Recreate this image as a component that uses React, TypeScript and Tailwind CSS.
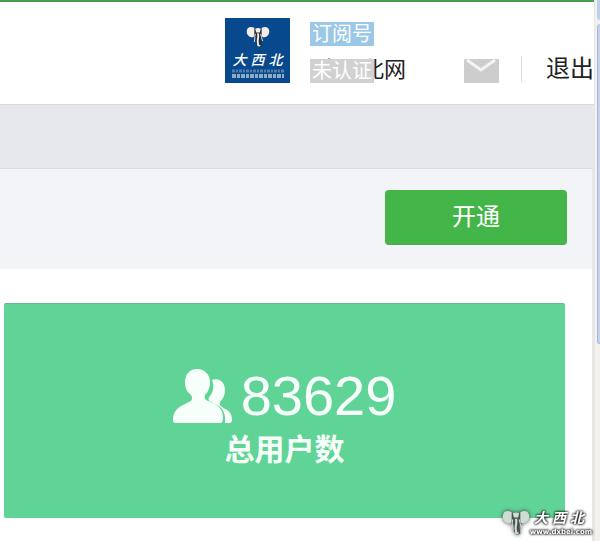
import React from 'react';

const account = {
  name: '大西北网',
  type: '订阅号',
  status: '未认证',
};

const totalUsers = 83629;

interface ElephantProps {
  className?: string;
  earColor: string;
  shadeColor: string;
}

const Elephant: React.FC<ElephantProps> = ({ className, earColor, shadeColor }) => (
  <svg viewBox="0 0 26 24" className={className} aria-hidden="true">
    <path d="M9 3h9l2 8-4 3 1 8-3 1-3-3 1-6-4-3z" fill={shadeColor} />
    <path d="M9 2C5 0 2 1 1 4c-1 4 1 7 4 8 2 1 4 0 4-2V6z" fill={earColor} />
    <path d="M17 2c4-2 7-1 8 2 1 4-1 7-4 8-2 1-4 0-4-2V6z" fill={earColor} />
    <path d="M10 3c2-1 4-1 6 0l-1 4h-4zM12 8h2c1 4-1 8 0 11 0 2 1 2 2 2-1 2-4 2-4-1-1-4 1-8 0-12z" fill={earColor} />
    <path
      d="M10 9c-1 3 0 5-1 8M16 9c1 3 1 5 2 7"
      fill="none"
      stroke={earColor}
      strokeWidth="1"
      strokeLinecap="round"
    />
  </svg>
);

const Avatar: React.FC = () => (
  <div className="w-[65px] h-[65px] bg-[#08488c] flex flex-col items-center pt-2 overflow-hidden shrink-0 text-white">
    <Elephant className="w-6 h-[22px] shrink-0" earColor="#f1eee8" shadeColor="#2b2a30" />
    <div className="flex gap-1 mt-1 italic text-sm leading-4 font-medium">
      <span>大</span>
      <span>西</span>
      <span>北</span>
    </div>
    <svg viewBox="0 0 54 12" className="w-[54px] h-3 shrink-0" aria-hidden="true">
      <path d="M1 3h52" stroke="#5580aa" strokeWidth="3" strokeDasharray="3 1 2 1" />
      <path d="M1 8h52" stroke="#8fabc6" strokeWidth="4" strokeDasharray="4 1 3 1" />
    </svg>
  </div>
);

const Header: React.FC = () => (
  <header className="h-[105px] bg-white border-t-2 border-[#4c9c50] border-b border-b-[#d8d9dc] flex justify-end items-start pt-4">
    <Avatar />
    <div className="relative ml-5 w-[97px] pt-1">
      <span className="block w-16 h-6 bg-[#9cc8e8] text-white text-[20px] leading-6 text-center">
        {account.type}
      </span>
      <div className="mt-3 pl-2 text-[22px] leading-6 whitespace-nowrap text-[#222]">{account.name}</div>
      <span className="absolute left-0 -bottom-px w-16 h-6 bg-[#d1d1d1] text-white text-[20px] leading-6 text-center">
        {account.status}
      </span>
    </div>
    <nav className="flex items-center pt-[37px] ml-[57px]">
      <a href="#messages" aria-label="消息" className="pt-1">
        <svg viewBox="0 0 35 24" className="w-[35px] h-6">
          <rect width="35" height="24" rx="1" fill="#cdcdcd" />
          <path d="M3 1l14 10L31 1" fill="none" stroke="#f4f4f4" strokeWidth="3" />
        </svg>
      </a>
      <span className="w-px h-[26px] bg-[#dedede] ml-[22px] mr-6" />
      <a href="#logout" className="text-2xl leading-7 text-[#222]">退出</a>
    </nav>
  </header>
);

const UsersIcon: React.FC = () => (
  <svg viewBox="0 0 60 54" className="w-[60px] h-[54px]" fill="#f7fffa" aria-hidden="true">
    <path d="M24 0c8 0 13 6 13 13 0 6-2 10-5 13-1 3 0 5 3 6l7 3c5 3 8 7 8 14 0 3-1 5-3 5H3c-2 0-3-1-3-3 0-8 4-12 10-15l6-3c3-1 4-4 2-7-4-3-6-7-6-13C12 6 16 0 24 0z" />
    <path d="M39 11c8-3 13 3 13 10 0 5-2 9-5 12-1 2 0 4 2 5l3 2c5 2 7 6 7 11 0 2-1 3-3 3h-4c1-9-2-15-8-18l-6-3c-3-1-3-4-1-6 4-5 4-11 2-16z" />
  </svg>
);

const StatCard: React.FC = () => (
  <section className="h-[215px] ml-1 mr-[27px] mt-[34px] bg-[#60d396] rounded-xs border-t border-[#69b78b] flex flex-col items-center pt-[58px] text-[#f7fffa]">
    <div className="flex items-center gap-2">
      <UsersIcon />
      <strong className="font-normal text-[56px] leading-[68px] font-['Liberation_Sans',sans-serif]">
        {totalUsers}
      </strong>
    </div>
    <h2 className="text-[30px] leading-10 font-bold">总用户数</h2>
  </section>
);

const Scrollbar: React.FC = () => (
  <div className="w-[6px] shrink-0 bg-[#f3f1ec] border-l border-[#e8e6e0] pl-[2px] flex flex-col gap-1" aria-hidden="true">
    <div className="h-5 bg-[#bfd0ee] rounded-bl-sm" />
    <div className="h-80 bg-[#c6d1ef] border-l border-b border-[#a9b9dc] rounded-l-sm" />
  </div>
);

const Watermark: React.FC = () => (
  <div className="absolute right-2 bottom-1 flex items-start text-white">
    <Elephant className="w-7 h-[26px] drop-shadow-[0_0_2px_#333]" earColor="#cfdcd4" shadeColor="#45544c" />
    <div className="flex flex-col items-end drop-shadow-[0_0_1px_#222]">
      <div className="flex gap-1 pr-2 text-sm leading-4 italic font-bold drop-shadow-[0_0_1px_#222]">
        <span>大</span>
        <span>西</span>
        <span>北</span>
      </div>
      <span className="text-[7px] leading-3 font-bold font-['DejaVu_Sans',sans-serif] drop-shadow-[0_0_1px_#222]">
        www.dxbei.com
      </span>
    </div>
  </div>
);

const App: React.FC = () => {
  return (
    <div className="relative flex min-h-screen bg-white font-['Liberation_Sans','Noto_Sans_CJK_SC',sans-serif]">
      <main className="flex-1 min-w-0">
        <Header />
        <div className="bg-[#e6e7eb] pt-[63px]">
          <div className="bg-white border-t border-[#d9dadd] border-r-2 border-r-[#e7e7e7]">
            <div className="bg-[#f3f4f8] flex justify-end pt-[21px] pb-6 pr-[25px]">
              <button
                type="button"
                className="w-[182px] h-[55px] rounded-sm bg-[#44b549] border-b border-[#4ea653] text-2xl text-white cursor-pointer"
              >
                开通
              </button>
            </div>
            <StatCard />
            <div className="h-6" />
          </div>
        </div>
      </main>
      <Scrollbar />
      <Watermark />
    </div>
  );
};

export default App;
